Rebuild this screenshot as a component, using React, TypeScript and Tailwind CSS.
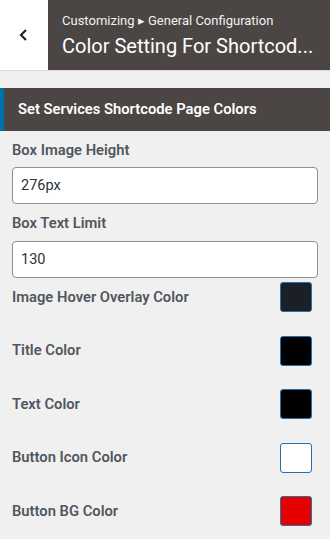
import React from 'react';

const colors = [
  { label: 'Image Hover Overlay Color', value: 'bg-[#1d1f27]' },
  { label: 'Title Color', value: 'bg-black' },
  { label: 'Text Color', value: 'bg-black' },
  { label: 'Button Icon Color', value: 'bg-white' },
  { label: 'Button BG Color', value: 'bg-[#e60000]' },
];

function App() {
  return (
    <div className="h-[539px] w-[330px] overflow-hidden bg-[#f0f0f1] font-['Roboto',sans-serif]">
      {/* Header */}
      <div className="flex h-[71px] border-b border-[#dcdcde]">
        <button className="flex w-[48px] items-center justify-center bg-white text-[#1d2327]">
          <svg width="12" height="14" viewBox="0 0 12 14" fill="none">
            <path d="M8 2L3 7l5 5" stroke="currentColor" strokeWidth="2.2" />
          </svg>
        </button>
        <div className="flex flex-1 flex-col justify-center bg-[#4b4644] pl-[14px] pr-2 text-white">
          <div className="text-[13px] leading-[16px] text-[#f0f0f1]">Customizing ▸ General Configuration</div>
          <div className="mt-[5px] truncate text-[20px] leading-[24px]">Color Setting For Shortcod...</div>
        </div>
      </div>

      {/* Section */}
      <div className="mt-[17px] flex h-[43px] items-center border-l-4 border-[#0073aa] bg-[#4b4644] pl-[14px] text-[14.75px] font-semibold text-white">
        Set Services Shortcode Page Colors
      </div>

      <div className="px-[12px]">
        <div className="mt-[9px] text-[14.75px] font-semibold leading-[20px] text-[#50575e]">Box Image Height</div>
        <input
          defaultValue="276px"
          className="mt-[7px] h-[37px] w-[306px] rounded-[4px] border border-[#8c8f94] bg-white px-[8px] text-[14.5px] text-[#2c3338] outline-none"
        />
        <div className="mt-[9px] text-[14.75px] font-semibold leading-[20px] text-[#50575e]">Box Text Limit</div>
        <input
          defaultValue="130"
          className="mt-[8px] h-[37px] w-[306px] rounded-[4px] border border-[#8c8f94] bg-white px-[8px] text-[14.5px] text-[#2c3338] outline-none"
        />

        <div className="mt-[4px] flex flex-col gap-[23.5px]">
          {colors.map((c) => (
            <div key={c.label} className="flex h-[30px] items-center justify-between pr-[6px]">
              <span className="text-[14.75px] font-semibold text-[#50575e]">{c.label}</span>
              <span className={`h-[30px] w-[32px] rounded-[3px] border border-[#2271b1] ${c.value}`} />
            </div>
          ))}
        </div>
      </div>
    </div>
  );
}

export default App;
